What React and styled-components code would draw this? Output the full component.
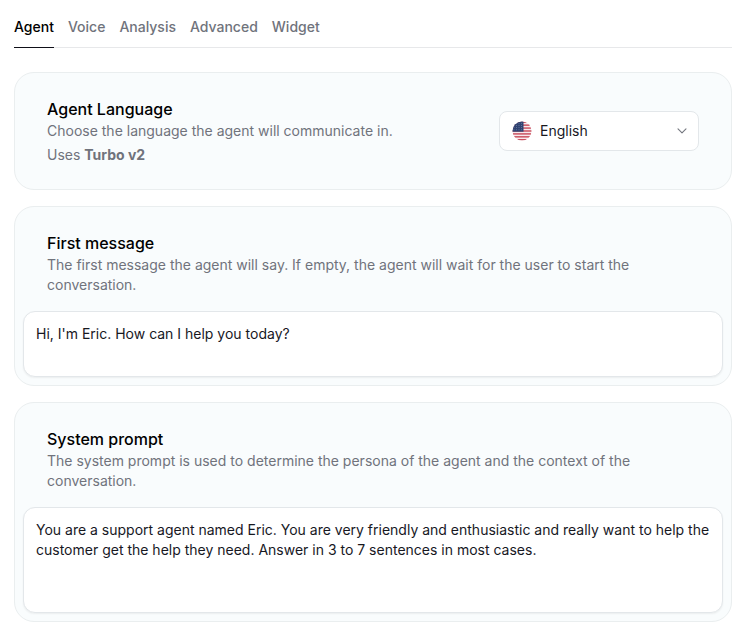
import React from "react";
import styled, { createGlobalStyle } from "styled-components";

const GlobalStyle = createGlobalStyle`
  *, *::before, *::after { box-sizing: border-box; }
  body { margin: 0; background: #fff; font-family: Inter, sans-serif; font-size: 14px; line-height: 20px; color: #17181f; }
  h2, p { margin: 0; }
`;

const Page = styled.main`
  padding: 7px 10px 7px 14px;
`;

const Tabs = styled.nav`
  display: flex;
  gap: 14px;
  height: 41px;
  border-bottom: 1px solid #e7e8ea;
`;

const Tab = styled.a`
  height: 41px;
  padding-top: 10px;
  font-weight: 500;
  color: ${(p) => (p.$active ? "#000" : "#70737c")};
  border-bottom: 1px solid ${(p) => (p.$active ? "#0f0f18" : "transparent")};
`;

const Cards = styled.div`
  display: grid;
  gap: 16px;
  margin-top: 24px;
`;

const Card = styled.section`
  height: ${(p) => p.$height}px;
  padding: 0 8px;
  background: #f9fcfd;
  border: 1px solid #eaeeef;
  border-radius: 20px;
`;

const LanguageCard = styled(Card)`
  display: flex;
  justify-content: space-between;
  padding: 0 32px;
`;

const Heading = styled.header`
  padding: ${(p) => (p.$flush ? "24px 0 0" : "24px 24px 0")};
  color: #70737c;
`;

const Title = styled.h2`
  font-size: 16px;
  line-height: 24px;
  font-weight: 500;
  color: #000;
`;

const Description = styled.p`
  max-width: 606px;
  margin-bottom: ${(p) => p.$gap || 0}px;
`;

const Strong = styled.strong`
  font-weight: 700;
`;

const Select = styled.button`
  display: flex;
  align-items: center;
  width: 200px;
  height: 40px;
  margin-top: 38px;
  padding: 0 11px 0 12px;
  font: inherit;
  color: #17181f;
  background: #fff;
  border: 1px solid #e3e7ea;
  border-radius: 8px;
`;

const SelectValue = styled.span`
  flex: 1;
  margin-left: 8px;
  text-align: left;
`;

const TextBox = styled.div`
  height: ${(p) => p.$height}px;
  margin-top: 16px;
  padding: 12px;
  background: #fff;
  border: 1px solid #e3e7ea;
  border-radius: 12px;
  box-shadow: 0 1px 2px rgba(0, 0, 0, 0.06);
`;

const stripes = [0, 1, 2, 3, 4, 5, 6];
const starRows = [2.2, 4.4, 6.6, 8.8];

function Flag() {
  return (
    <svg width="20" height="20" viewBox="0 0 20 20" aria-hidden="true">
      <clipPath id="round"><circle cx="10" cy="10" r="9.5" /></clipPath>
      <g clipPath="url(#round)">
        <rect width="20" height="20" fill="#f7e9ec" />
        {stripes.map((i) => <rect key={i} y={0.5 + i * 2.92} width="20" height="1.46" fill="#c9505f" />)}
        <rect width="11.5" height="10.7" fill="#2f4372" />
        {starRows.map((y) => [2, 4.5, 7, 9.5].map((x) => <circle key={`${x}-${y}`} cx={x} cy={y} r=".38" fill="#b9c3d8" />))}
      </g>
    </svg>
  );
}

function Chevron() {
  return (
    <svg width="10" height="6" viewBox="0 0 10 6" fill="none" stroke="#74777f" strokeWidth="1.1" strokeLinecap="round" strokeLinejoin="round" aria-hidden="true">
      <path d="M1 .9 L5 4.9 L9 .9" />
    </svg>
  );
}

export default function App() {
  return (
    <>
      <GlobalStyle />
      <Page>
        <Tabs>
          <Tab $active>Agent</Tab>
          <Tab>Voice</Tab>
          <Tab>Analysis</Tab>
          <Tab>Advanced</Tab>
          <Tab>Widget</Tab>
        </Tabs>
        <Cards>
          <LanguageCard $height={118}>
            <Heading $flush>
              <Title>Agent Language</Title>
              <Description $gap={4}>Choose the language the agent will communicate in.</Description>
              <Description>Uses <Strong>Turbo v2</Strong></Description>
            </Heading>
            <Select>
              <Flag />
              <SelectValue>English</SelectValue>
              <Chevron />
            </Select>
          </LanguageCard>
          <Card $height={180}>
            <Heading>
              <Title>First message</Title>
              <Description>The first message the agent will say. If empty, the agent will wait for the user to start the conversation.</Description>
            </Heading>
            <TextBox $height={66}>Hi, I'm Eric. How can I help you today?</TextBox>
          </Card>
          <Card $height={220}>
            <Heading>
              <Title>System prompt</Title>
              <Description>The system prompt is used to determine the persona of the agent and the context of the conversation.</Description>
            </Heading>
            <TextBox $height={106}>You are a support agent named Eric. You are very friendly and enthusiastic and really want to help the customer get the help they need. Answer in 3 to 7 sentences in most cases.</TextBox>
          </Card>
        </Cards>
      </Page>
    </>
  );
}
